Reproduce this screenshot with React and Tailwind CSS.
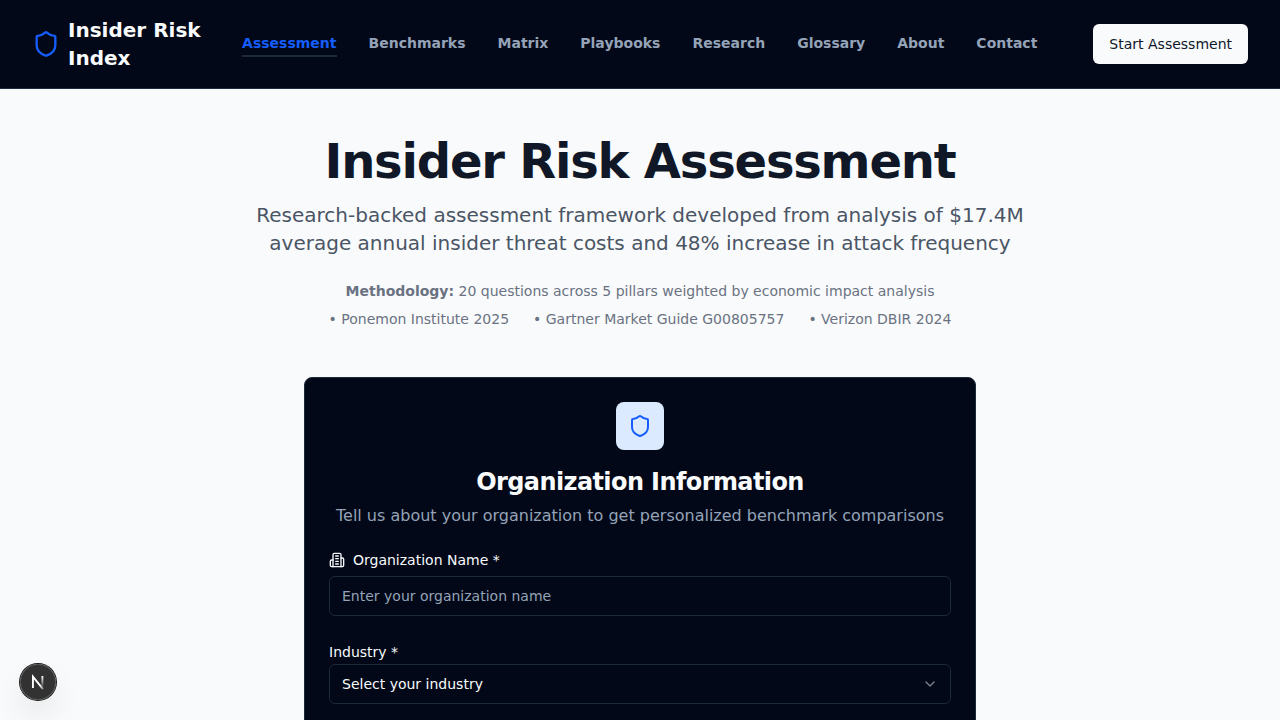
import { ChevronDown, Shield } from "lucide-react";

const links = [
  "Assessment",
  "Benchmarks",
  "Matrix",
  "Playbooks",
  "Research",
  "Glossary",
  "About",
  "Contact",
];

const sources = [
  "Ponemon Institute 2025",
  "Gartner Market Guide G00805757",
  "Verizon DBIR 2024",
];

function BuildingIcon() {
  return (
    <svg
      viewBox="0 0 24 24"
      className="size-4"
      fill="none"
      stroke="currentColor"
      strokeWidth="2"
      strokeLinecap="round"
      strokeLinejoin="round"
      aria-hidden="true"
    >
      <path d="M6 22V4a2 2 0 0 1 2-2h8a2 2 0 0 1 2 2v18Z" />
      <path d="M6 12H4a2 2 0 0 0-2 2v6a2 2 0 0 0 2 2h2" />
      <path d="M18 9h2a2 2 0 0 1 2 2v9a2 2 0 0 1-2 2h-2" />
      <path d="M10 6h4" />
      <path d="M10 10h4" />
      <path d="M10 14h4" />
      <path d="M10 18h4" />
    </svg>
  );
}

function Header() {
  return (
    <header className="sticky top-0 z-10 flex items-center border-b border-slate-800 bg-[#020817] px-8 py-4">
      <a href="#home" className="flex items-center gap-2 text-slate-50">
        <Shield className="size-7 shrink-0 text-[#155dfc]" />
        <span className="w-[134px] text-xl font-bold">Insider Risk Index</span>
      </a>
      <nav className="ml-auto flex items-center gap-8 text-sm font-semibold">
        {links.map((label, i) => (
          <a
            key={label}
            href={"#" + label.toLowerCase()}
            aria-current={i === 0 ? "page" : undefined}
            className={
              i === 0
                ? "border-b-2 border-slate-800 py-0.5 text-[#155dfc]"
                : "border-b-2 border-transparent py-0.5 text-[#94a3b8]"
            }
          >
            {label}
          </a>
        ))}
      </nav>
      <button
        type="button"
        className="ml-14 h-10 rounded-md bg-[#f8fafc] px-4 text-sm font-medium whitespace-nowrap text-[#0f172a]"
      >
        Start Assessment
      </button>
    </header>
  );
}

function Intro() {
  return (
    <section className="mx-auto max-w-4xl text-center">
      <h1 className="text-5xl font-bold tracking-tight text-[#101828]">Insider Risk Assessment</h1>
      <p className="mx-auto mt-4 max-w-3xl text-xl text-[#4a5565]">
        Research-backed assessment framework developed from analysis of $17.4M average annual
        insider threat costs and 48% increase in attack frequency
      </p>
      <div className="mt-6 space-y-2 text-sm text-[#6a7282]">
        <p>
          <strong className="font-bold">Methodology:</strong> 20 questions across 5 pillars weighted
          by economic impact analysis
        </p>
        <ul className="flex justify-center gap-6">
          {sources.map((source) => (
            <li key={source}>• {source}</li>
          ))}
        </ul>
      </div>
    </section>
  );
}

function OrganizationForm() {
  return (
    <form className="mx-auto mt-12 max-w-2xl rounded-lg border border-slate-800 bg-[#020817] p-6 text-slate-50">
      <div className="flex flex-col items-center text-center">
        <div className="flex size-12 items-center justify-center rounded-lg bg-[#dbeafe]">
          <Shield className="size-6 text-[#155dfc]" />
        </div>
        <h2 className="mt-4 text-2xl font-semibold tracking-tight">Organization Information</h2>
        <p className="mt-1.5 text-[#94a3b8]">
          Tell us about your organization to get personalized benchmark comparisons
        </p>
      </div>
      <div className="mt-6 text-sm">
        <label htmlFor="org-name" className="flex items-center gap-2 leading-4 font-medium">
          <BuildingIcon />
          Organization Name *
        </label>
        <input
          id="org-name"
          type="text"
          placeholder="Enter your organization name"
          className="mt-2 h-10 w-full rounded-md border border-slate-800 bg-transparent px-3 placeholder:text-[#94a3b8]"
        />
      </div>
      <div className="mt-6 text-sm">
        <label htmlFor="industry" className="block leading-6 font-medium">
          Industry *
        </label>
        <div className="relative">
          <select
            id="industry"
            className="block h-10 w-full appearance-none rounded-md border border-slate-800 bg-[#020817] px-3"
          >
            <option>Select your industry</option>
          </select>
          <ChevronDown className="pointer-events-none absolute top-3 right-[13px] size-4 opacity-50" />
        </div>
      </div>
    </form>
  );
}

function DevBadge() {
  return (
    <button
      type="button"
      aria-label="Open developer tools"
      className="fixed bottom-5 left-5 flex size-9 items-center justify-center rounded-full bg-black/80 shadow-[0_0_0_1px_#171717,inset_0_0_0_1px_rgba(255,255,255,0.14),0_16px_32px_-8px_rgba(0,0,0,0.24)]"
    >
      <svg viewBox="0 0 40 40" className="size-10 shrink-0" fill="none" strokeWidth="1.9">
        <defs>
          <linearGradient id="diagonal" gradientUnits="userSpaceOnUse" x1="9.5" y1="10.5" x2="14" y2="16.5">
            <stop stopColor="white" />
            <stop offset="0.7" stopColor="white" stopOpacity="0.3" />
            <stop offset="1" stopColor="white" stopOpacity="0" />
          </linearGradient>
          <linearGradient id="stem" gradientUnits="userSpaceOnUse" x1="11.8" y1="1" x2="11.9" y2="13">
            <stop stopColor="white" />
            <stop offset="1" stopColor="white" stopOpacity="0" />
          </linearGradient>
        </defs>
        <g transform="translate(12.6 13)">
          <path d="M12.4 14.1 L2.34 1.6 V13" stroke="url(#diagonal)" />
          <path d="M11.8 1 V12.6" stroke="url(#stem)" />
        </g>
      </svg>
    </button>
  );
}

export default function App() {
  return (
    <div className="min-h-screen bg-[#f9fafb] font-['DejaVu_Sans',sans-serif]">
      <Header />
      <main className="px-8 py-12">
        <Intro />
        <OrganizationForm />
      </main>
      <DevBadge />
    </div>
  );
}
